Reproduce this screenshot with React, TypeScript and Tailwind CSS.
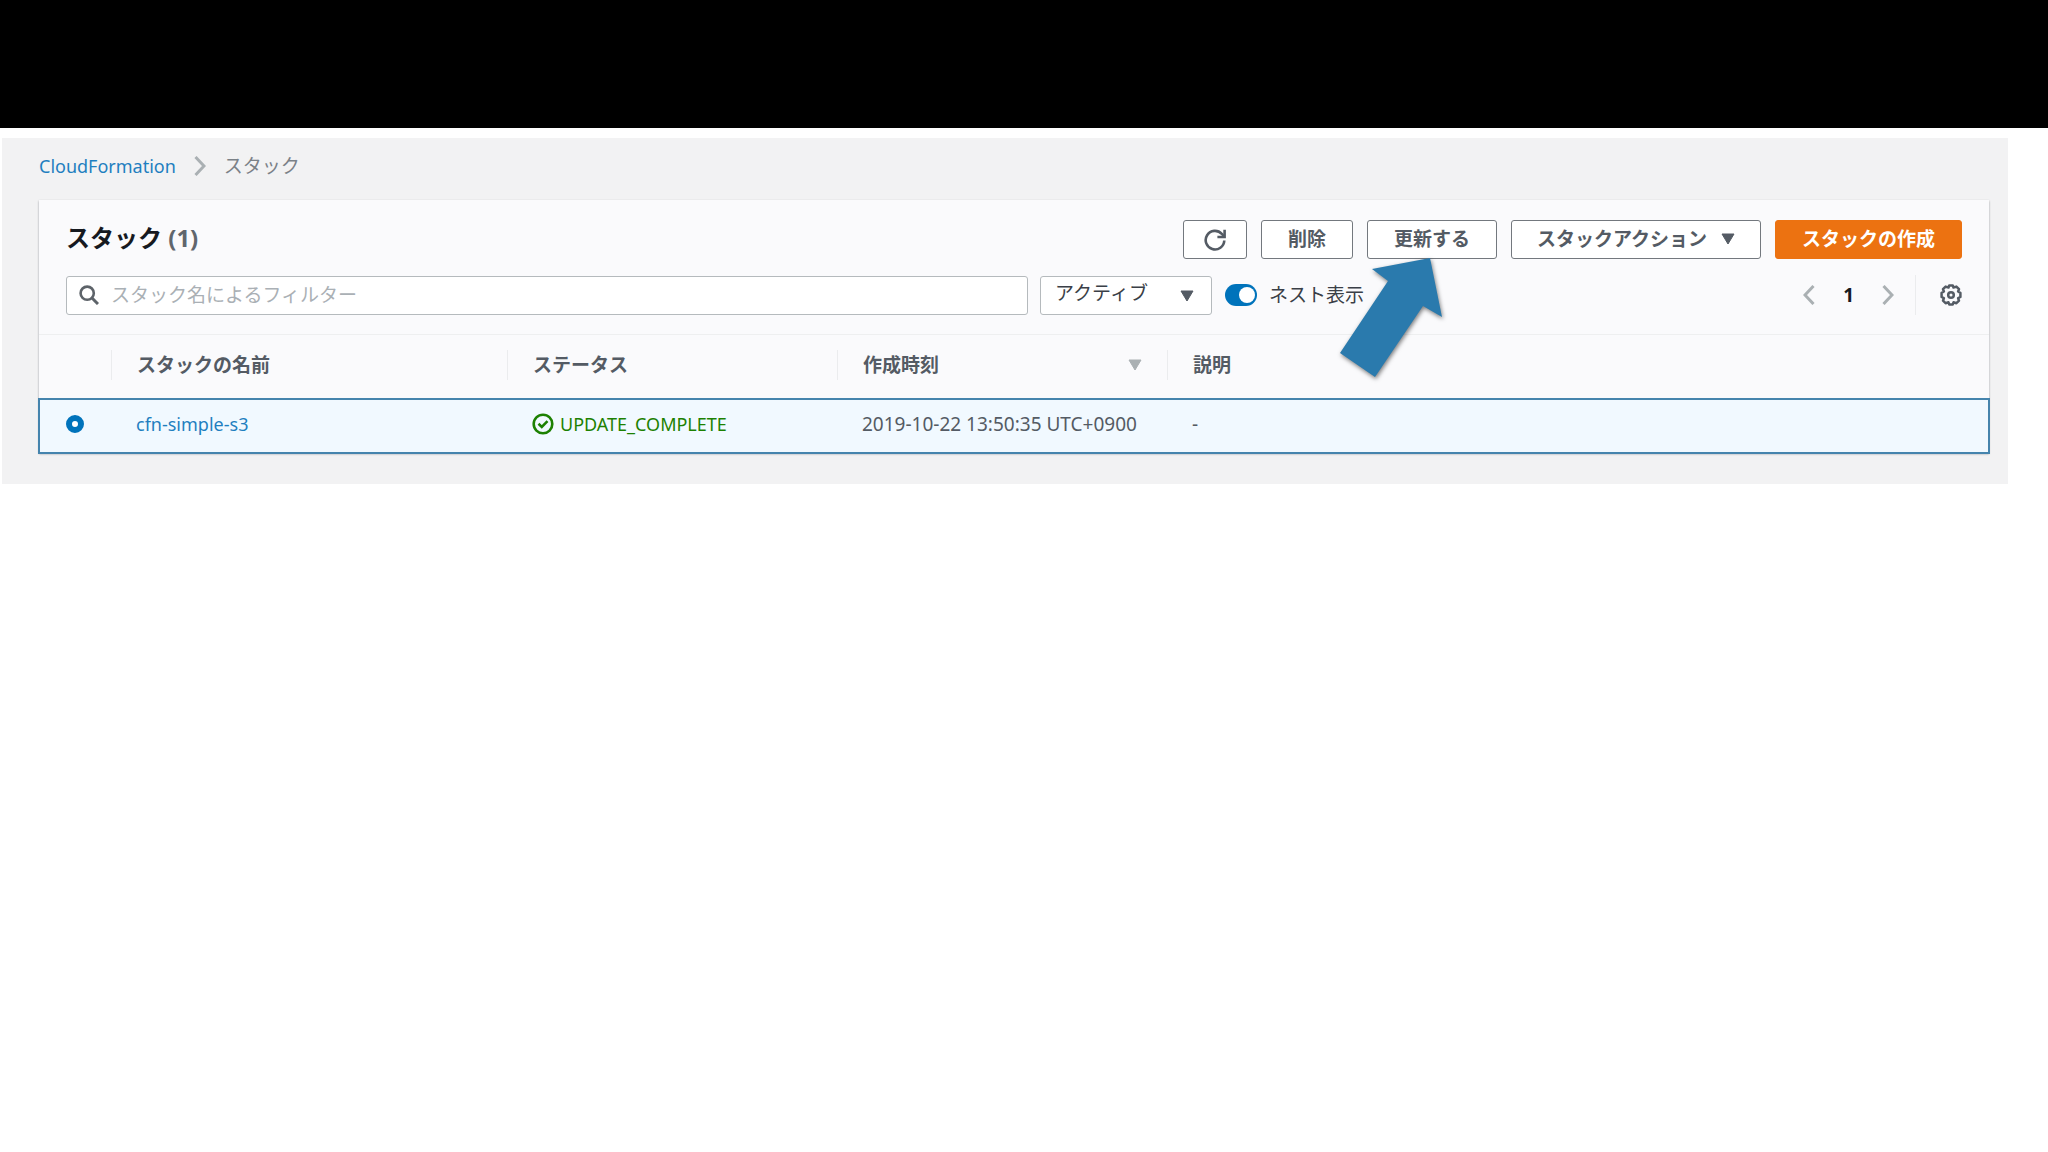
import { useState } from 'react';
import type { ReactNode } from 'react';
import clsx from 'clsx';

interface Stack {
  name: string;
  status: string;
  createdAt: string;
  description: string;
}

const STACKS: Stack[] = [
  { name: 'cfn-simple-s3', status: 'UPDATE_COMPLETE', createdAt: '2019-10-22 13:50:35 UTC+0900', description: '-' },
];

const COLUMNS = [
  { label: 'スタックの名前', width: 'w-[396px]', sorted: false },
  { label: 'ステータス', width: 'w-[330px]', sorted: false },
  { label: '作成時刻', width: 'w-[330px]', sorted: true },
  { label: '説明', width: '', sorted: false },
];

export default function App() {
  return (
    <div
      lang="ja"
      className="min-h-screen bg-white font-['Noto_Sans','Noto_Sans_CJK_JP',sans-serif] text-[19px] leading-[28px] text-[#545b64]"
    >
      <div className="h-32 bg-black" />
      <main className="mt-2.5 mr-10 ml-0.5 bg-[#f2f2f3] pt-3.5 pr-[19px] pb-[31px] pl-[37px]">
        <Breadcrumb />
        <StackPanel />
      </main>
    </div>
  );
}

function Breadcrumb() {
  return (
    <nav aria-label="Breadcrumb" className="mb-5 flex items-center">
      <a href="#cloudformation" className="text-[18px] text-[#1f7fc0]">CloudFormation</a>
      <Chevron className="mx-[18px] h-5 w-3" />
      <span className="text-[#7b8187]">スタック</span>
    </nav>
  );
}

function StackPanel() {
  const [selected, setSelected] = useState(STACKS[0].name);

  return (
    <section className="bg-[#fafafc] shadow-[0_1px_2px_#9a9da1]">
      <div className="border-b border-[#eeeff0] px-[27px] pt-5 pb-[19px]">
        <div className="mb-4 flex items-center justify-between">
          <h1 className="pb-1 text-[24px] font-bold text-[#16191f]">
            スタック <span className="text-[#60666d]">(1)</span>
          </h1>
          <div className="flex gap-3.5">
            <Button label="更新" className="px-5">
              <RefreshIcon />
            </Button>
            <Button>削除</Button>
            <div className="relative">
              <Button>更新する</Button>
              <PointerArrow />
            </div>
            <Button className="px-[25px]">
              スタックアクション
              <Triangle className="ml-3.5 h-3 w-3.5 text-[#545b64]" />
            </Button>
            <Button primary>スタックの作成</Button>
          </div>
        </div>
        <Filters />
      </div>

      <table className="w-full table-fixed border-collapse text-left">
        <thead>
          <tr className="h-16">
            <th className="w-[72px]" aria-label="選択" />
            {COLUMNS.map((c) => (
              <th key={c.label} className={clsx('p-0 pb-1 font-bold', c.width)}>
                <div className="flex h-[30px] items-center justify-between border-l border-[#ebecee] pr-[25px] pl-[25px]">
                  {c.label}
                  {c.sorted && <Triangle className="h-3 w-3.5 text-[#aab0b3]" />}
                </div>
              </th>
            ))}
          </tr>
        </thead>
        <tbody>
          {STACKS.map((s) => (
            <tr key={s.name} className="h-[54px] bg-[#f1f9ff] outline-2 -outline-offset-1 outline-[#4584ad]">
              <td className="pb-1 pl-[27px]">
                <input
                  type="radio"
                  name="stack"
                  aria-label={s.name}
                  checked={selected === s.name}
                  onChange={() => setSelected(s.name)}
                  className="block size-[18px] appearance-none rounded-full border border-[#879596] bg-white checked:border-[6px] checked:border-[#0073bb]"
                />
              </td>
              <td className="pb-1 pl-[25px] text-[18px]">
                <a href="#stack" className="text-[#1f7fc0]">{s.name}</a>
              </td>
              <td className="pb-1 pl-[25px] text-[18px]">
                <span className="flex items-center gap-1.5 text-[#1d8102]">
                  <CheckIcon />
                  {s.status}
                </span>
              </td>
              <td className="pb-1 pl-[25px]">{s.createdAt}</td>
              <td className="pb-1 pl-[25px]">{s.description}</td>
            </tr>
          ))}
        </tbody>
      </table>
    </section>
  );
}

function Filters() {
  const [nested, setNested] = useState(true);

  return (
    <div className="flex items-center">
      <label className="flex h-[39px] max-w-[962px] flex-1 items-center rounded-[3px] border border-[#b5babd] bg-white pl-3">
        <SearchIcon />
        <input
          type="text"
          aria-label="スタック名によるフィルター"
          placeholder="スタック名によるフィルター"
          className="ml-3 h-7 min-w-0 flex-1 outline-none placeholder:text-[#aab0b5]"
        />
      </label>

      <div className="relative ml-3">
        <select
          aria-label="ステータスフィルター"
          className="block h-[39px] w-[172px] appearance-none rounded-[3px] border border-[#b5babd] bg-white pb-1 pl-3.5 text-[#3a3f47]"
        >
          <option>アクティブ</option>
        </select>
        <Triangle className="pointer-events-none absolute top-3.5 right-[18px] h-3 w-3.5 text-[#545b64]" />
      </div>

      <label className="ml-[13px] flex items-center text-[#3a3f47]">
        <input
          type="checkbox"
          checked={nested}
          onChange={(e) => setNested(e.target.checked)}
          className="mr-3 flex h-[22px] w-8 appearance-none items-center rounded-full bg-[#879596] px-0.5 before:size-4 before:rounded-full before:bg-white checked:justify-end checked:bg-[#0073bb]"
        />
        ネスト表示
      </label>

      <div className="ml-auto flex items-center">
        <button type="button" aria-label="前へ">
          <Chevron className="h-5 w-3 rotate-180" />
        </button>
        <span className="mx-7 font-bold text-[#16191f]">1</span>
        <button type="button" aria-label="次へ">
          <Chevron className="h-5 w-3" />
        </button>
        <span className="mr-6 ml-[21px] h-10 border-l border-[#ebecee]" />
        <button type="button" aria-label="設定">
          <GearIcon />
        </button>
      </div>
    </div>
  );
}

interface ButtonProps {
  children: ReactNode;
  label?: string;
  primary?: boolean;
  className?: string;
}

function Button({ children, label, primary, className = 'px-[26px]' }: ButtonProps) {
  return (
    <button
      type="button"
      aria-label={label}
      className={clsx(
        'flex h-[39px] items-center rounded-[3px] border pb-0.5 font-bold whitespace-nowrap',
        primary ? 'border-[#ec7211] bg-[#ec7211] text-white' : 'border-[#73787e] bg-white text-[#545b64]',
        className,
      )}
    >
      {children}
    </button>
  );
}

// 更新ボタンを指す矢印
function PointerArrow() {
  return (
    <svg
      viewBox="0 0 110 130"
      aria-hidden="true"
      className="pointer-events-none absolute top-[37px] -left-[30px] h-[130px] w-[110px] drop-shadow-[1px_2px_2px_rgba(0,0,0,0.5)]"
    >
      <path d="M93 1 L35 12 L51 24 L3 96 L38 120 L86 49 L105 60 Z" fill="#2a7aad" />
    </svg>
  );
}

function Chevron({ className }: { className?: string }) {
  return (
    <svg viewBox="0 0 12 20" fill="none" stroke="#aab0b3" strokeWidth="3" className={className}>
      <path d="M1.5 1 L10 10 L1.5 19" />
    </svg>
  );
}

function Triangle({ className }: { className?: string }) {
  return (
    <svg viewBox="0 0 14 12" fill="currentColor" className={className}>
      <path d="M1 1 H13 L7 11 Z" stroke="currentColor" strokeLinejoin="round" />
    </svg>
  );
}

function SearchIcon() {
  return (
    <svg viewBox="0 0 20 20" fill="none" stroke="#5d6369" strokeWidth="2.6" className="size-5">
      <circle cx="8.2" cy="8.2" r="6.6" />
      <path d="M13 13 L19 19" strokeWidth="3" />
    </svg>
  );
}

function RefreshIcon() {
  return (
    <svg viewBox="0 0 22 22" fill="none" stroke="#545b64" strokeWidth="2.6" className="mt-0.5 size-[22px]">
      <path d="M20.3 11.5 A9.3 9.3 0 1 1 17.8 4.8 L20 7.5" />
      <path d="M20.6 0.8 V8 H13.4" />
    </svg>
  );
}

function CheckIcon() {
  return (
    <svg viewBox="0 0 22 22" fill="none" stroke="#1d8102" strokeWidth="2.6" className="size-[22px]">
      <circle cx="11" cy="11" r="9.3" />
      <path d="M6.5 10.8 L9.8 14 L15.5 8.2" />
    </svg>
  );
}

function GearIcon() {
  return (
    <svg viewBox="0 0 22 22" fill="none" stroke="#545b64" strokeWidth="2.5" strokeLinejoin="round" className="size-[22px]">
      <path d="M9.2 1.5 h3.6 l.7 2 2.9-.9 2.6 2.6 -.9 2.3 2.3 1.3 v4.2 l-2.3 1.2 .9 2.4 -2.6 2.6 -2.9-.9 -.7 2.1 h-3.6 l-.7-2.1 -2.9.9 -2.6-2.6 .9-2.4 -2.3-1.2 v-4.2 l2.3-1.3 -.9-2.3 2.6-2.6 2.9.9 z" />
      <circle cx="11" cy="11" r="2.8" />
    </svg>
  );
}
